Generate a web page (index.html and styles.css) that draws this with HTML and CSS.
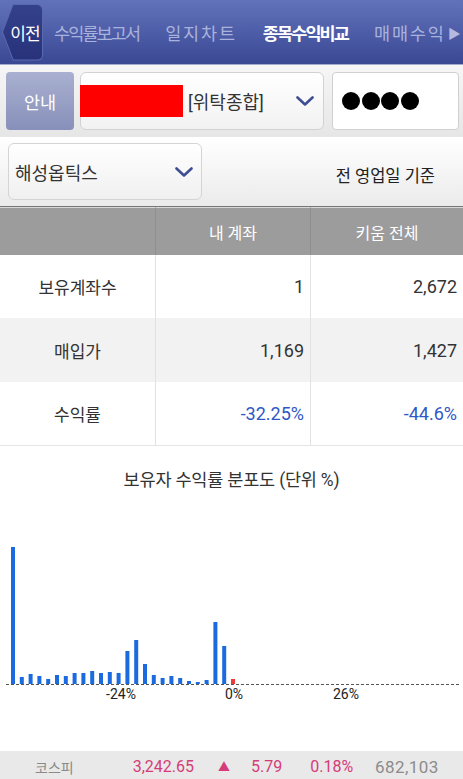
FILE: index.html
```html
<!DOCTYPE html>
<html lang="ko">
<head>
<meta charset="utf-8">
<title>종목수익비교</title>
<link rel="stylesheet" href="styles.css">
</head>
<body>
<div class="screen">
  <nav class="nav">
    <div class="back"><div class="back-in">이전</div></div>
    <div class="tabs">
      <span class="tab long">수익률보고서</span>
      <span class="tab">일지차트</span>
      <span class="tab long active">종목수익비교</span>
      <span class="tab">매매수익</span>
    </div>
    <span class="more">▶</span>
  </nav>

  <div class="toolbar">
    <button class="info">안내</button>
    <div class="account">
      <span class="redact"></span>
      <span class="acc-type">[위탁종합]</span>
      <svg class="chev" width="18" height="10" viewBox="0 0 18 10"><polyline points="1.5,1.5 9,8.5 16.5,1.5"/></svg>
    </div>
    <div class="pw"><i></i><i></i><i></i><i></i></div>
  </div>

  <div class="filter">
    <div class="stock">
      <span>해성옵틱스</span>
      <svg class="chev" width="18" height="10" viewBox="0 0 18 10"><polyline points="1.5,1.5 9,8.5 16.5,1.5"/></svg>
    </div>
    <span class="basis">전 영업일 기준</span>
  </div>

  <div class="grid">
    <div class="hd"></div>
    <div class="hd">내 계좌</div>
    <div class="hd">키움 전체</div>

    <div class="lbl">보유계좌수</div>
    <div class="val">1</div>
    <div class="val">2,672</div>

    <div class="lbl alt">매입가</div>
    <div class="val alt">1,169</div>
    <div class="val alt">1,427</div>

    <div class="lbl">수익률</div>
    <div class="val neg">-32.25%</div>
    <div class="val neg">-44.6%</div>
  </div>

  <section class="chart">
    <h2 class="chart-title">보유자 수익률 분포도 (단위 %)</h2>
    <svg class="bars" width="463" height="261" viewBox="0 0 463 261">
      <g class="blue">
        <rect x="11" y="57" width="4" height="137"/>
        <rect x="19.8" y="187" width="4" height="7"/>
        <rect x="28.6" y="184" width="4" height="10"/>
        <rect x="37.4" y="186" width="4" height="8"/>
        <rect x="46.2" y="189" width="4" height="5"/>
        <rect x="55" y="185" width="4" height="9"/>
        <rect x="63.8" y="186" width="4" height="8"/>
        <rect x="72.6" y="183" width="4" height="11"/>
        <rect x="81.4" y="183" width="4" height="11"/>
        <rect x="90.2" y="181" width="4" height="13"/>
        <rect x="99" y="183" width="4" height="11"/>
        <rect x="107.8" y="182" width="4" height="12"/>
        <rect x="116.6" y="183" width="4" height="11"/>
        <rect x="125.4" y="161" width="4" height="33"/>
        <rect x="134.2" y="150" width="4" height="44"/>
        <rect x="143" y="174" width="4" height="20"/>
        <rect x="151.8" y="185" width="4" height="9"/>
        <rect x="160.6" y="188" width="4" height="6"/>
        <rect x="169.4" y="186" width="4" height="8"/>
        <rect x="178.2" y="188" width="4" height="6"/>
        <rect x="187" y="191" width="4" height="3"/>
        <rect x="195.8" y="192" width="4" height="2"/>
        <rect x="204.6" y="190" width="4" height="4"/>
        <rect x="213.4" y="132" width="4" height="62"/>
        <rect x="222.2" y="156" width="4" height="38"/>
      </g>
      <rect class="red" x="231" y="189" width="4" height="5"/>
      <line class="base" x1="6" y1="194.5" x2="459" y2="194.5"/>
      <text x="121" y="209" text-anchor="middle">-24%</text>
      <text x="234" y="209" text-anchor="middle">0%</text>
      <text x="346" y="209" text-anchor="middle">26%</text>
    </svg>
  </section>

  <footer class="ticker">
    <span class="t-name">코스피</span>
    <span class="t-up t-price">3,242.65</span>
    <span class="t-up t-arrow">▲</span>
    <span class="t-up t-chg">5.79</span>
    <span class="t-up t-pct">0.18%</span>
    <span class="t-vol">682,103</span>
  </footer>
</div>
</body>
</html>
```

FILE: styles.css
```css
* { box-sizing: border-box; margin: 0; padding: 0; }
html, body { width: 463px; height: 779px; overflow: hidden; background: #fff; }
body { font-family: Roboto, "Noto Sans CJK KR", sans-serif; color: #333; }

.screen { display: flex; flex-direction: column; height: 779px; }

/* top navigation */
.nav {
  flex: none; height: 65px; display: flex; align-items: center;
  padding-left: 2px; overflow: hidden; white-space: nowrap;
  background: linear-gradient(#6272ba, #3a4894);
  border-bottom: 1px solid #a4aacb;
}
.back {
  flex: none; width: 41px; height: 57px; padding: 1px;
  background: #5969b0;
  clip-path: polygon(11px 0, 100% 0, 100% 100%, 11px 100%, 0 50%);
  border-radius: 0 6px 6px 0;
}
.back-in {
  width: 100%; height: 100%;
  background: linear-gradient(#34418b, #27327a);
  clip-path: polygon(10.5px 0, 100% 0, 100% 100%, 10.5px 100%, 0 50%);
  border-radius: 0 5px 5px 0;
  display: flex; align-items: center; justify-content: center; padding-left: 5px;
  color: #fff; font-size: 17px; letter-spacing: -1px;
}
.tabs { display: flex; gap: 26px; margin-left: 11px; flex: none; }
.tab { font-size: 17.5px; color: #a9b2dc; letter-spacing: 1.8px; }
.tab.long { letter-spacing: -1.9px; }
.tab.active { color: #fff; font-weight: 700; }
.more { margin-left: 2px; font-size: 13px; color: #b4bbe0; flex: none; }

/* account toolbar */
.toolbar {
  flex: none; height: 72px; display: flex; align-items: stretch;
  padding: 7px 4px 7px 6px; gap: 6px;
  background: linear-gradient(#f6f6f6, #e6e6e6);
}
.info {
  flex: none; width: 68px; border: none; border-radius: 4px;
  background: linear-gradient(#a9b0d0, #8790ba);
  color: #fff; font-family: "Noto Sans CJK KR", sans-serif; font-size: 17.5px;
}
.account {
  flex: none; width: 244px; display: flex; align-items: center;
  border: 1px solid #d2d2d2; border-radius: 6px;
  background: linear-gradient(#ffffff, #f2f2f2);
}
.redact { width: 103px; height: 32px; background: #ff0000; margin-left: -1px; }
.acc-type { margin-left: 5px; font-size: 18px; color: #333; }
.chev { flex: none; margin-left: auto; }
.chev polyline { fill: none; stroke: #3f4e92; stroke-width: 2.6; stroke-linecap: round; stroke-linejoin: round; }
.account .chev { margin-right: 9px; }
.pw {
  flex: none; width: 127px; margin-left: 2px; display: flex; align-items: center; gap: 1.7px;
  padding-left: 9px; background: #fff; border: 1px solid #d0d0d0; border-radius: 4px;
}
.pw i { display: block; width: 18px; height: 18px; border-radius: 50%; background: #000; }

/* stock filter row */
.filter {
  flex: none; height: 70px; display: flex; align-items: center;
  padding: 0 28px 0 8px;
  background: linear-gradient(#ffffff, #ebebeb);
  border-bottom: 1px solid #777;
}
.stock {
  width: 194px; height: 57px; display: flex; align-items: center;
  padding: 0 8px 0 6px;
  border: 1px solid #d4d4d4; border-radius: 6px;
  background: linear-gradient(#ffffff, #f0f0f0);
  font-size: 18px; color: #333;
}
.basis { margin-left: auto; padding-top: 7px; font-size: 16.5px; color: #222; }

/* comparison table */
.grid {
  flex: none; display: grid;
  grid-template-columns: 155px 155px 1fr;
  grid-template-rows: 48px 63px 64px 63px;
  border-bottom: 1px solid #e4e4e4;
}
.grid > div { display: flex; align-items: center; }
.hd {
  background: #9c9c9c; color: #fff; font-size: 16px; justify-content: center;
  border-top: 1px solid #d8d8d8;
}
.hd + .hd { border-left: 1px solid #8f8f8f; }
.lbl { justify-content: center; font-size: 17px; color: #333; }
.val {
  justify-content: flex-end; padding-right: 6px; font-size: 18px; color: #333;
  border-left: 1px solid #e2e2e2;
}
.alt { background: #f2f2f2; }
.neg { color: #2f58c6; }

/* distribution chart */
.chart { flex: 1; display: flex; flex-direction: column; }
.chart-title {
  margin-top: 24px; height: 20px; line-height: 20px; text-align: center;
  font-size: 17.5px; font-weight: 400; color: #333; letter-spacing: -0.2px;
}
.bars { display: block; }
.bars .blue rect { fill: #1b6ae0; }
.bars .red { fill: #ec3b3b; }
.bars .base { stroke: #555; stroke-width: 1; stroke-dasharray: 3 2; }
.bars text { font-family: Roboto, sans-serif; font-size: 14px; fill: #222; }

/* bottom ticker */
.ticker {
  flex: none; height: 28px; display: flex; align-items: center;
  padding: 3px 0 0 35px; background: #e9e9e9;
  font-size: 16px; white-space: nowrap;
}
.t-name { font-size: 14px; color: #8a8a8a; }
.t-up { color: #d63c78; }
.t-price { margin-left: 59px; }
.t-arrow { margin-left: 24px; font-size: 12px; }
.t-chg { margin-left: 21px; }
.t-pct { margin-left: 28px; }
.t-vol { margin-left: 22px; color: #8c8c8c; font-size: 17px; letter-spacing: 0.4px; }
```
